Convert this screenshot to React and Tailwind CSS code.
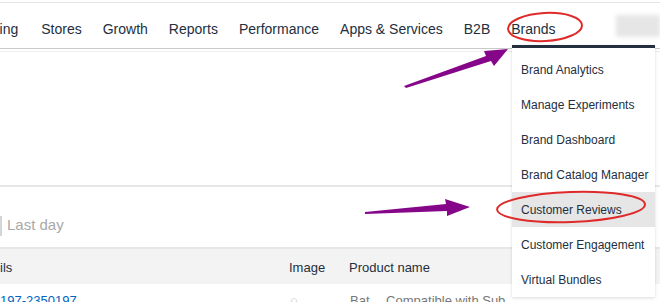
import React from "react";

const navItems = ["Advertising", "Stores", "Growth", "Reports", "Performance", "Apps & Services", "B2B", "Brands"];

const brandMenu = [
  "Brand Analytics",
  "Manage Experiments",
  "Brand Dashboard",
  "Brand Catalog Manager",
  "Customer Reviews",
  "Customer Engagement",
  "Virtual Bundles",
];

function Annotations() {
  return (
    <svg className="absolute inset-0 pointer-events-none" width="660" height="302" viewBox="0 0 660 302">
      {/* arrow to Brands */}
      <polygon points="404,86 486,56 484,51 508,49 494,66 491,61 406,88" fill="#86068a" />
      {/* arrow to Customer Reviews */}
      <polygon points="365,212 446,204 445,199 470,207 447,216 447,211 365,214" fill="#86068a" />
      <ellipse cx="545" cy="27" rx="37" ry="14" fill="none" stroke="#df2a2a" strokeWidth="2" transform="rotate(-3 545 27)" />
      <ellipse cx="571" cy="207" rx="74" ry="15" fill="none" stroke="#df2a2a" strokeWidth="2" transform="rotate(-2 571 207)" />
    </svg>
  );
}

export default function App() {
  return (
    <div className="relative w-[660px] h-[302px] overflow-hidden bg-white font-['Liberation_Sans',Arial,sans-serif]">
      <div className="h-[3px] border-b border-[#e4e4e4]" />
      {/* top nav */}
      <div className="flex items-center h-[46px] pt-[7px] border-b border-[#c9c9c9]">
        <div className="flex items-center gap-[21px] ml-[-51px] text-[14px] text-[#232f3e]">
          {navItems.map((item, i) => (
            <span key={item} className={i === 0 ? "whitespace-nowrap mr-[2px]" : "whitespace-nowrap"}>{item}</span>
          ))}
        </div>
        <div className="ml-auto w-[44px] h-[22px] bg-[#e6e6e6] blur-[2px] mb-[6px]" />
      </div>
      <div className="h-[3px] border-b border-[#eeeeee]" />

      <div className="h-[133px]" />

      {/* filter area */}
      <div className="border-t-2 border-[#e7e7e7] h-[62px] flex items-end pb-[11px]">
        <div className="w-[2px] h-[20px] bg-[#d5d5d5] mr-[5px]" />
        <span className="text-[15px] text-[#a9a9a9]">Last day</span>
      </div>

      {/* table header */}
      <div className="border-t-2 border-[#e7e7e7] bg-[#f3f3f3] h-[37px] pt-[3px] flex items-center text-[13px] text-[#232f3e]">
        <span className="w-[289px]">ils</span>
        <span className="w-[60px]">Image</span>
        <span>Product name</span>
      </div>

      {/* first table row, cut off */}
      <div className="h-[20px] flex items-start pt-[10px] text-[13px] leading-none whitespace-nowrap">
        <span className="w-[290px] text-[#0066c0]">197-2350197</span>
        <span className="w-[60px] text-[#bbbbbb]">○</span>
        <span className="text-[#777]">Bat… Compatible with Sub…</span>
      </div>

      {/* brands dropdown */}
      <div className="absolute left-[512px] top-[45px] w-[143px] bg-white border-t-[3px] border-[#232f3e] shadow-[0_1px_3px_rgba(0,0,0,0.15)] pt-[4px]">
        {brandMenu.map((item) => (
          <div
            key={item}
            className={
              item === "Customer Reviews"
                ? "h-[35px] flex items-center pl-[9px] text-[12px] text-[#232f3e] bg-[#e6e6e6] whitespace-nowrap"
                : "h-[35px] flex items-center pl-[9px] text-[12px] text-[#232f3e] whitespace-nowrap"
            }
          >
            {item}
          </div>
        ))}
      </div>

      <Annotations />
    </div>
  );
}
